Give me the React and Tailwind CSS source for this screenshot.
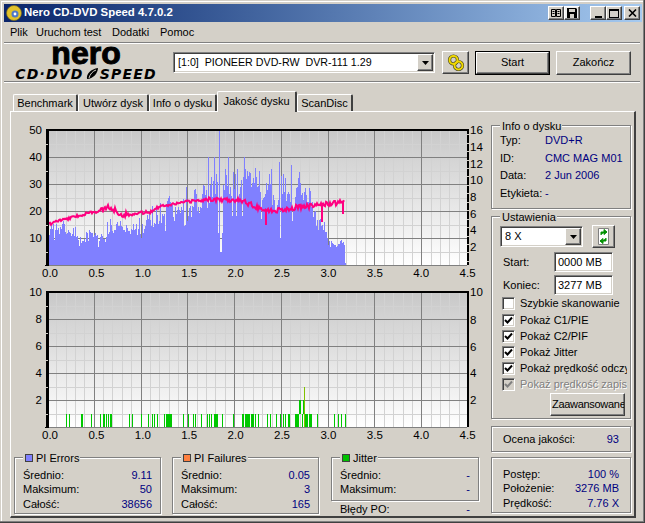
// App.jsx - Nero CD-DVD Speed, "Jakość dysku" tab
import React from 'react';

const raised = 'border border-white border-r-[#404040] border-b-[#404040] shadow-[inset_-1px_-1px_0_#808080]';
const sunken = 'border border-[#808080] border-r-white border-b-white shadow-[inset_1px_1px_0_#404040,inset_-1px_-1px_0_#d4d0c8]';
const etched = 'border border-[#808080] shadow-[1px_1px_0_#fff,inset_1px_1px_0_#fff]';

const rng = (seed) => () => {
  seed = (seed + 0x6d2b79f5) | 0;
  let t = Math.imul(seed ^ (seed >>> 15), 1 | seed);
  t = (t + Math.imul(t ^ (t >>> 7), 61 | t)) ^ t;
  return ((t ^ (t >>> 14)) >>> 0) / 4294967296;
};

const lerp = (pts, x) => {
  for (let i = 1; i < pts.length; i++) {
    if (x <= pts[i][0]) {
      const [x0, ...a] = pts[i - 1];
      const [x1, ...b] = pts[i];
      const t = (x - x0) / (x1 - x0);
      return a.map((v, k) => v + (b[k] - v) * t);
    }
  }
  return pts[pts.length - 1].slice(1);
};

// x, base value, spike value
const piEnvelope = [
  [48, 12, 17], [56, 15, 20], [70, 12, 15], [85, 10, 13], [100, 10, 14], [112, 12, 18], [128, 12, 15],
  [140, 14, 19], [150, 16, 21], [164, 19, 27], [178, 21, 26], [190, 24, 33], [205, 26, 40], [216, 27, 44],
  [225, 28, 42], [240, 28, 41], [262, 26, 38], [280, 26, 40], [298, 25, 38], [308, 22, 30], [318, 16, 22],
  [326, 13, 16], [330, 7, 10], [336, 10, 15], [344, 7, 8],
];

const piBars = () => {
  const r = rng(42);
  let d = '';
  let cluster = 0;
  for (let x = 48; x <= 344; x++) {
    const [base, spike] = lerp(piEnvelope, x);
    cluster = cluster * 0.6 + (r() - 0.5) * 0.9;
    let v = base * (0.88 + 0.22 * r()) + cluster * (spike - base);
    if (r() < 0.2) v = base + r() * (spike - base);
    if (r() < 0.04) v = base * 0.65;
    if (x === 219) v = 50;
    if (x === 220 || x === 221) v = 5;
    if (x === 218 || x === 222) v = 12;
    if (x === 208 || x === 214 || x === 228) v = 40;
    if (x === 280) v = 10;
    d += `M${x + 0.5} 265V${Math.round(265 - Math.max(v, 1) * 2.7)}`;
  }
  return d + 'M345.5 265V263';
};

const speedPts = [
  [48, 225], [54, 222], [70, 218], [85, 214], [100, 211], [110, 207], [118, 212], [125, 215], [140, 213],
  [150, 212], [156, 208], [165, 205], [180, 203], [200, 200], [220, 199], [240, 200], [250, 204],
  [262, 209], [272, 211], [285, 209], [300, 207], [320, 205], [344, 202],
];

const speedLine = () => {
  const r = rng(7);
  let d = 'M48 233L48 225';
  for (let x = 49; x <= 344; x++) {
    const [y] = lerp(speedPts, x);
    const amp = x > 200 && x < 345 ? 2.6 : x > 100 && x < 130 ? 3 : 1.4;
    d += `L${x} ${(y + (r() - 0.5) * amp * 2).toFixed(1)}`;
    if (x === 266) d += `L${x} 225L${x} ${y}`;
    if (x === 322) d += `L${x} 222L${x} ${y}`;
    if (x === 343) d += `L${x} 214L${x} ${y}`;
  }
  return d;
};

const ones = [66, 69, 81, 82, 91, 100, 103, 104, 106, 108, 110, 111, 129, 132, 141, 148, 152, 154, 157, 164, 166, 167, 168, 169, 170, 171, 183, 188, 193, 195, 201, 207, 209, 211, 214, 215, 216, 217, 222, 233, 243, 246, 247, 242, 245, 248, 249, 251, 252, 253, 255, 258, 267, 270, 276, 280, 283, 285, 288, 289, 295, 296, 297, 298, 302, 305, 306, 307, 309, 310, 311, 317, 334, 338, 341, 345];
const twos = [299, 300, 303];

const Chart = ({ top, leftLabels, rightLabels, children, dashedRight }) => {
  const bottom = top + 135;
  const xs = [];
  for (let i = 0; i <= 45; i++) xs.push(47 + (i * 421) / 45);
  const rows = leftLabels.length - 1;
  const step = 135 / rows;
  const gid = `bg${top}`;
  return (
    <svg width="476" height="160" viewBox={`11 ${top - 10} 476 160`} className="block" fontSize="11.5" fill="#000" shapeRendering="crispEdges">
      <defs>
        <linearGradient id={gid} x1="0" y1="0" x2="0" y2="1">
          <stop offset="0" stopColor="#c8c8c8" />
          <stop offset="1" stopColor="#ffffff" />
        </linearGradient>
      </defs>
      <rect x="47" y={top} width="421" height="135" fill={`url(#${gid})`} />
      {xs.map((x, i) => i % 5 !== 0 && <rect key={i} x={Math.round(x)} y={top} width="1" height="135" fill="#d2d2d2" />)}
      {leftLabels.map((_, i) => i < rows && <rect key={i} x="45" y={Math.round(top + (i + 0.5) * step)} width="422" height="1" fill="#d2d2d2" />)}
      {xs.map((x, i) => i % 5 === 0 && <rect key={i} x={Math.round(x)} y={top} width="1" height="135" fill="#808080" />)}
      {leftLabels.map((_, i) => i > 0 && <rect key={i} x="49" y={Math.round(top + i * step)} width="418" height="1" fill="#808080" />)}
      {children}
      <rect x="46" y={top - 1} width="423" height="2" fill="#000" />
      <rect x="46" y={top} width="3" height="135" fill="#000" />
      <rect x="467" y={top} width="2" height="135" fill="#000" />
      {leftLabels.map((_, i) => i < rows && <rect key={i} x="45" y={Math.round(top + (i + 0.5) * step)} width="3" height="1" fill="#d4d0c8" />)}
      {dashedRight && Array.from({ length: 16 }, (_, i) => (
        <rect key={i} x="467" y={Math.round(top + (i + 0.5) * 8.44)} width="2" height="1" fill="#d4d0c8" />
      ))}
      <rect x="45" y={bottom} width="4" height="1" fill="#000" />
      <g shapeRendering="auto">
        {leftLabels.map((l, i) => <text key={l} x="42" y={Math.round(top + i * step) + 4} textAnchor="end">{l}</text>)}
        {rightLabels.map(([l, y]) => <text key={l} x="470" y={y + 4}>{l}</text>)}
        {[0, 0.5, 1, 1.5, 2, 2.5, 3, 3.5, 4, 4.5].map((v, i) => (
          <text key={v} x={50 + i * 46.4} y={bottom + 12} textAnchor="middle">{v.toFixed(1)}</text>
        ))}
      </g>
    </svg>
  );
};

const Group = ({ legend, swatch, className, children }) => (
  <div className={`relative ${etched} ${className}`}>
    <div className="absolute left-[8px] -top-[7px] flex items-center gap-[3px] bg-[#d4d0c8] pl-[2px] pr-[1px] h-[14px]">
      {swatch && <span className={`w-[8px] h-[8px] border border-[#404040] ${swatch}`} />}
      <span>{legend}</span>
    </div>
    {children}
  </div>
);

const Row = ({ label, value }) => (
  <div className="flex items-center justify-between h-[14.5px]">
    <span>{label}</span>
    <span className="text-[#000080]">{value}</span>
  </div>
);

const Check = ({ label, checked = true, disabled, className = '' }) => (
  <div className={`flex items-center h-[16px] w-[125px] overflow-hidden whitespace-nowrap ${className}`}>
    <span className={`shrink-0 w-[13px] h-[13px] ${sunken} ${disabled ? 'bg-[#d4d0c8]' : 'bg-white'} flex items-center justify-center`}>
      {checked && (
        <svg width="9" height="9" viewBox="0 0 9 9">
          <path d="M1 4 L3.5 6.5 L8 1.5" fill="none" stroke={disabled ? '#808080' : '#000'} strokeWidth="2" />
        </svg>
      )}
    </span>
    <span className={`ml-[5px] ${disabled ? 'text-[#808080] [text-shadow:1px_1px_0_#fff]' : ''}`}>{label}</span>
  </div>
);

const Arrow = () => (
  <svg width="7" height="4" viewBox="0 0 7 4"><path d="M0 0H7L3.5 4Z" fill="#000" /></svg>
);

const Tab = ({ label, width, active }) => (
  <div
    className={`flex items-center justify-center border-l border-t border-white border-r-2 border-r-[#404040] rounded-t-[2px] whitespace-nowrap ${
      active ? 'h-[21px] relative z-10 bg-[#d4d0c8] -mb-[1px] pb-[1px]' : 'h-[17px]'
    }`}
    style={{ width }}
  >
    {label}
  </div>
);

const TitleButton = ({ children, className = '' }) => (
  <div className={`w-[16px] h-[14px] bg-[#d4d0c8] flex items-center justify-center ${raised} ${className}`}>{children}</div>
);

export default function App() {
  return (
    <div className="w-[645px] h-[523px] overflow-hidden bg-[#d4d0c8] text-[11px] leading-none text-black font-['Liberation_Sans',sans-serif] border-r border-b border-[#404040]">
      <div className="h-full border-r border-b border-[#808080]">
        <div className="h-full pt-[1px] pl-[1px]">
          <div className="h-full border-l border-t border-white pt-[2px] pl-[2px] pr-[1px]">
            {/* title bar */}
            <div className="h-[18px] flex items-center bg-gradient-to-r from-[#0a246a] to-[#a6caf0] pr-[2px]">
              <svg width="16" height="16" viewBox="0 0 16 16" className="ml-[2px] mr-[2px]">
                <circle cx="8" cy="8" r="7.5" fill="#e2c22a" stroke="#7a6a20" strokeWidth="0.7" />
                <circle cx="9" cy="9" r="3.5" fill="#4f78c8" />
                <circle cx="9" cy="9" r="1.4" fill="#fff" />
              </svg>
              <span className="text-white font-bold text-[11.4px]">Nero CD-DVD Speed 4.7.0.2</span>
              <div className="ml-auto flex items-center">
                <TitleButton>
                  <svg width="10" height="8" viewBox="0 0 10 8"><path d="M0.5 0.5H4.5V7.5H0.5ZM5.5 0.5H9.5V7.5H5.5ZM1.5 2.5H3.5M6.5 2.5H8.5M1.5 4.5H3.5M6.5 4.5H8.5" fill="none" stroke="#000" /></svg>
                </TitleButton>
                <TitleButton className="bg-[#eeeeee]">
                  <svg width="10" height="10" viewBox="0 0 10 10"><path d="M0 0H9L10 1V10H0Z" fill="#000" /><path d="M2 1H8V4H2ZM3 6H7V10H3Z" fill="#d4d0c8" /></svg>
                </TitleButton>
                <div className="w-[10px]" />
                <TitleButton>
                  <span className="w-[7px] h-[2px] bg-black mt-[7px]" />
                </TitleButton>
                <TitleButton>
                  <span className="w-[10px] h-[9px] border border-black border-t-2" />
                </TitleButton>
                <div className="w-[2px]" />
                <TitleButton>
                  <svg width="9" height="8" viewBox="0 0 9 8"><path d="M1 0.5L8 7.5M8 0.5L1 7.5" stroke="#000" strokeWidth="1.6" /></svg>
                </TitleButton>
              </div>
            </div>

            {/* menu */}
            <div className="h-[19px] mt-[1px] flex items-center pl-[6px]">
              <span className="w-[26px]">Plik</span>
              <span className="w-[76px]">Uruchom test</span>
              <span className="w-[48px]">Dodatki</span>
              <span>Pomoc</span>
            </div>
            <div className="h-[2px] border-t border-[#808080] border-b border-b-white mr-[2px]" />

            {/* toolbar */}
            <div className="h-[37px] flex items-center pr-[10px]">
              <div className="w-[172px] shrink-0 flex flex-col items-center -ml-[4px]">
                <span className="text-[32px] leading-[20px] h-[20px] font-bold [-webkit-text-stroke:1px_#000] -mt-[3px]">nero</span>
                <div className="flex items-center font-['DejaVu_Sans',sans-serif] font-bold italic text-[14px] leading-[12px] mt-[5px] whitespace-nowrap">
                  <span className="tracking-[1.2px]">CD·DVD</span>
                  <svg width="14" height="12" viewBox="0 0 14 12" className="mx-[1px]"><path d="M2 11C1 6 6 1 13 0C13 5 8 11 2 11Z" fill="#000" /><path d="M4 10C5 6 8 3 11 2" stroke="#d4d0c8" fill="none" /></svg>
                  <span className="tracking-[1.2px]">SPEED</span>
                </div>
              </div>
              <div className={`w-[262px] h-[21px] bg-white flex items-center ml-[1px] ${sunken}`}>
                <span className="pl-[4px] flex-1 whitespace-pre text-[10.7px]">[1:0]  PIONEER DVD-RW  DVR-111 1.29</span>
                <div className={`w-[16px] h-[17px] mr-[1px] bg-[#d4d0c8] flex items-center justify-center ${raised}`}><Arrow /></div>
              </div>
              <div className={`w-[27px] h-[23px] ml-[7px] flex items-center justify-center ${raised}`}>
                <svg width="18" height="18" viewBox="0 0 18 18">
                  <circle cx="6.5" cy="6" r="4" fill="none" stroke="#404020" strokeWidth="3.2" />
                  <circle cx="11.5" cy="11.5" r="4" fill="none" stroke="#404020" strokeWidth="3.2" />
                  <circle cx="6.5" cy="6" r="4" fill="none" stroke="#f0d800" strokeWidth="2" />
                  <circle cx="11.5" cy="11.5" r="4" fill="none" stroke="#f0d800" strokeWidth="2" />
                </svg>
              </div>
              <div className="w-[75px] h-[24px] ml-[6px] border border-black">
                <div className={`h-full flex items-center justify-center ${raised}`}>Start</div>
              </div>
              <div className={`w-[75px] h-[24px] ml-[6px] flex items-center justify-center ${raised}`}>Zakończ</div>
            </div>
            <div className="h-[2px] border-t border-[#808080] border-b border-b-white mr-[2px]" />

            {/* tabs */}
            <div className="h-[28px] flex items-end pl-[9px]">
              <Tab label="Benchmark" width={65} />
              <Tab label="Utwórz dysk" width={71} />
              <Tab label="Info o dysku" width={68} />
              <Tab label="Jakość dysku" width={80} active />
              <Tab label="ScanDisc" width={56} />
            </div>

            {/* panel */}
            <div className="w-[626px] h-[407px] ml-[6px] border-l border-t border-white border-r-2 border-r-[#404040] border-b-2 border-b-[#404040] flex items-start">
              <div className="w-[480px] shrink-0 pt-[8px]">
                <Chart
                  top={130}
                  dashedRight
                  leftLabels={['50', '40', '30', '20', '10', '']}
                  rightLabels={[['16', 130], ['14', 147], ['12', 164], ['10', 180], ['8', 197], ['6', 214], ['4', 230], ['2', 247]]}
                >
                  <path d={piBars()} stroke="#8080ff" strokeWidth="1" fill="none" />
                  <path d={speedLine()} stroke="#ff0080" strokeWidth="2" fill="none" shapeRendering="auto" />
                </Chart>
                <div className="mt-[2px]">
                  <Chart
                    top={292}
                    leftLabels={['10', '8', '6', '4', '2', '']}
                    rightLabels={[['10', 292], ['8', 320], ['6', 347], ['4', 373], ['2', 400]]}
                  >
                    {ones.map((x) => <rect key={x} x={x} y="414" width="1" height="13" fill="#00c800" />)}
                    {twos.map((x) => <rect key={x} x={x} y="400" width="1" height="14" fill="#00c800" />)}
                    <rect x="304" y="387" width="1" height="40" fill="#80c000" />
                  </Chart>
                </div>
                <div className="mt-[15px] pl-[3px] flex items-start">
                  <Group legend="PI Errors" swatch="bg-[#8080ff]" className="w-[147px] h-[57px] px-[8px] pt-[10px] mr-[11px]">
                    <Row label="Średnio:" value="9.11" />
                    <Row label="Maksimum:" value="50" />
                    <Row label="Całość:" value="38656" />
                  </Group>
                  <Group legend="PI Failures" swatch="bg-[#ff8040]" className="w-[147px] h-[57px] px-[8px] pt-[10px] mr-[12px]">
                    <Row label="Średnio:" value="0.05" />
                    <Row label="Maksimum:" value="3" />
                    <Row label="Całość:" value="165" />
                  </Group>
                  <div className="w-[148px]">
                    <Group legend="Jitter" swatch="bg-[#00c000]" className="h-[44px] px-[8px] pt-[10px]">
                      <Row label="Średnio:" value="-" />
                      <Row label="Maksimum:" value="-" />
                    </Group>
                    <div className="px-[9px] mt-[1px]">
                      <Row label="Błędy PO:" value="-" />
                    </div>
                  </div>
                </div>
              </div>

              <div className="w-[140px] shrink-0 pt-[13px]">
                <Group legend="Info o dysku" className="h-[84px] pl-[8px] pt-[6px]">
                  {[['Typ:', 'DVD+R'], ['ID:', 'CMC MAG M01'], ['Data:', '2 Jun 2006'], ['Etykieta:', '-']].map(([k, v]) => (
                    <div key={k} className="flex items-center h-[17.6px]">
                      <span className="w-[45px]">{k}</span>
                      <span className="text-[#000080]">{v}</span>
                    </div>
                  ))}
                </Group>
                <Group legend="Ustawienia" className="h-[203px] mt-[7px] pl-[8px] pt-[8px]">
                  <div className="flex items-center">
                    <div className={`w-[83px] h-[21px] bg-white flex items-center ${sunken}`}>
                      <span className="flex-1 pl-[4px]">8 X</span>
                      <div className={`w-[16px] h-[17px] mr-[1px] bg-[#d4d0c8] flex items-center justify-center ${raised}`}><Arrow /></div>
                    </div>
                    <div className={`w-[23px] h-[23px] ml-[9px] flex items-center justify-center ${raised}`}>
                      <svg width="15" height="17" viewBox="0 0 15 17">
                        <path d="M2.5 0.5H12.5V16.5H2.5Z" fill="#fff" stroke="#808080" />
                        <path d="M5 7V4H9M8 1.5L11 4L8 6.5Z" fill="#009000" stroke="#009000" />
                        <path d="M10 10V13H6M7 10.5L4 13L7 15.5Z" fill="#009000" stroke="#009000" />
                      </svg>
                    </div>
                  </div>
                  <div className="flex items-center mt-[4px] pl-[3px]">
                    <span className="w-[51px] pt-[1px]">Start:</span>
                    <div className={`w-[59px] h-[20px] bg-white flex items-center pl-[3px] ${sunken}`}>0000 MB</div>
                  </div>
                  <div className="flex items-center mt-[3px] pl-[3px]">
                    <span className="w-[51px]">Koniec:</span>
                    <div className={`w-[59px] h-[20px] bg-white flex items-center pl-[3px] ${sunken}`}>3277 MB</div>
                  </div>
                  <div className="pl-[2px]">
                    <Check label="Szybkie skanowanie" checked={false} className="mb-[1px]" />
                    <Check label="Pokaż C1/PIE" />
                    <Check label="Pokaż C2/PIF" />
                    <Check label="Pokaż Jitter" />
                    <Check label="Pokaż prędkość odczytu" />
                    <Check label="Pokaż prędkość zapisu" disabled />
                  </div>
                  <div className={`w-[75px] h-[23px] ml-[50px] mt-[1px] flex items-center pl-[1px] overflow-hidden whitespace-nowrap tracking-[-0.3px] ${raised}`}>Zaawansowane</div>
                </Group>
                <div className={`h-[26px] mt-[7px] px-[11px] flex items-center justify-between ${etched}`}>
                  <span>Ocena jakości:</span>
                  <span className="text-[#000080]">93</span>
                </div>
                <div className={`h-[56px] mt-[5px] px-[11px] pt-[9px] ${etched}`}>
                  <Row label="Postęp:" value="100 %" />
                  <Row label="Położenie:" value="3276 MB" />
                  <Row label="Prędkość:" value="7.76 X" />
                </div>
              </div>
            </div>
          </div>
        </div>
      </div>
    </div>
  );
}
